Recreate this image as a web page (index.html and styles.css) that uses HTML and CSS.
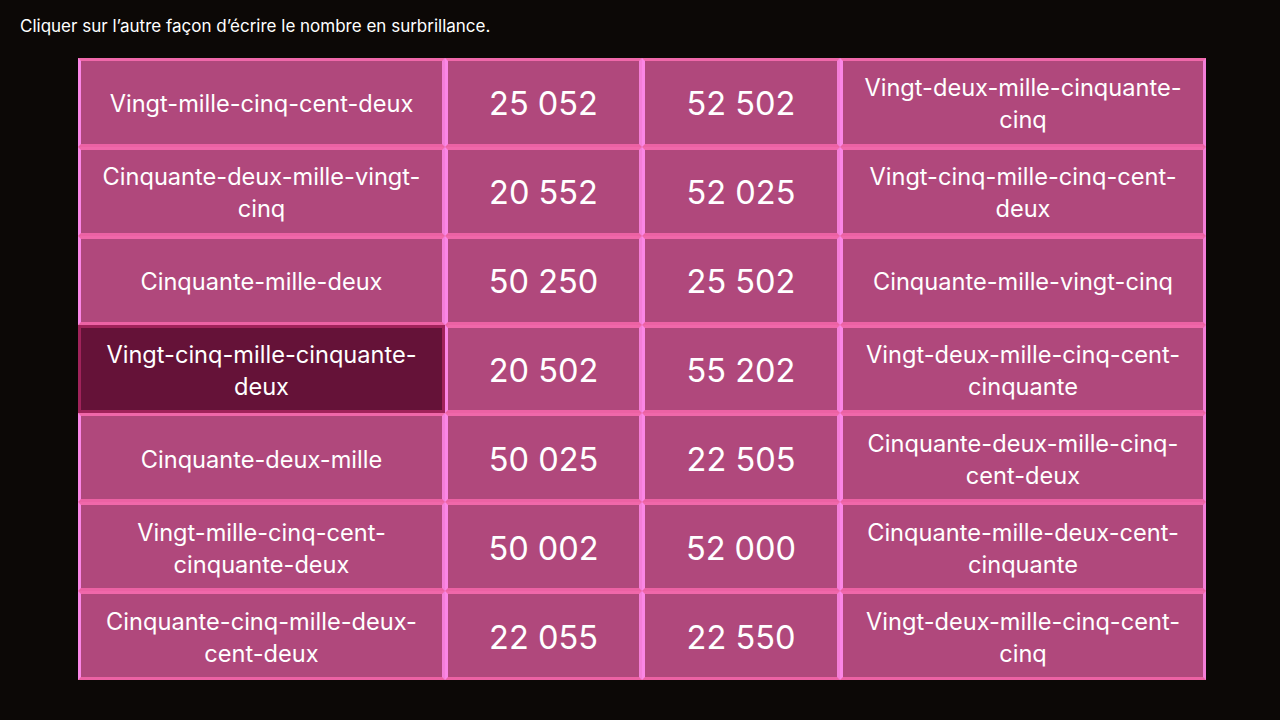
FILE: index.html
```html
<!DOCTYPE html>
<html lang="fr">
<head>
<meta charset="utf-8">
<link rel="stylesheet" href="styles.css">
</head>
<body>
<p class="title">Cliquer sur l’autre façon d’écrire le nombre en surbrillance.</p>
<div class="grid">
  <div class="cell word">Vingt-mille-cinq-cent-deux</div>
  <div class="cell num">25 052</div>
  <div class="cell num">52 502</div>
  <div class="cell word">Vingt-deux-mille-cinquante-cinq</div>

  <div class="cell word">Cinquante-deux-mille-vingt-cinq</div>
  <div class="cell num">20 552</div>
  <div class="cell num">52 025</div>
  <div class="cell word">Vingt-cinq-mille-cinq-cent-deux</div>

  <div class="cell word">Cinquante-mille-deux</div>
  <div class="cell num">50 250</div>
  <div class="cell num">25 502</div>
  <div class="cell word">Cinquante-mille-vingt-cinq</div>

  <div class="cell word active">Vingt-cinq-mille-cinquante-deux</div>
  <div class="cell num">20 502</div>
  <div class="cell num">55 202</div>
  <div class="cell word">Vingt-deux-mille-cinq-cent-cinquante</div>

  <div class="cell word">Cinquante-deux-mille</div>
  <div class="cell num">50 025</div>
  <div class="cell num">22 505</div>
  <div class="cell word">Cinquante-deux-mille-cinq-cent-deux</div>

  <div class="cell word">Vingt-mille-cinq-cent-cinquante-deux</div>
  <div class="cell num">50 002</div>
  <div class="cell num">52 000</div>
  <div class="cell word">Cinquante-mille-deux-cent-cinquante</div>

  <div class="cell word">Cinquante-cinq-mille-deux-cent-deux</div>
  <div class="cell num">22 055</div>
  <div class="cell num">22 550</div>
  <div class="cell word">Vingt-deux-mille-cinq-cent-cinq</div>
</div>
</body>
</html>
```
FILE: styles.css
```css
html, body {
  margin: 0;
  padding: 0;
  background: #0c0806;
  width: 1280px;
  height: 720px;
  overflow: hidden;
  font-family: "Inter", "Noto Sans", "Liberation Sans", sans-serif;
}
.title {
  margin: 0;
  padding: 15px 0 0 20px;
  height: 43px;
  box-sizing: border-box;
  color: #ffffff;
  font-size: 17px;
  line-height: 22px;
}
.grid {
  margin-left: 78px;
  width: 1128px;
  display: grid;
  grid-template-columns: 367px 197px 198px 366px;
  grid-template-rows: repeat(7, 1fr);
  height: 622px;
  margin-top: 15px;
}
.cell {
  box-sizing: border-box;
  background: #b0487c;
  border-style: solid;
  border-width: 3px;
  border-top-color: #f068aa;
  border-bottom-color: #ec62a4;
  border-left-color: #fb86e6;
  border-right-color: #f47ed8;
  color: #ffffff;
  display: flex;
  align-items: center;
  justify-content: center;
  text-align: center;
  padding-top: 4px;
}
.word {
  font-size: 23.6px;
  line-height: 32px;
  padding-left: 14px;
  padding-right: 14px;
}
.num {
  font-size: 32.5px;
  line-height: 40px;
}
.active {
  background: #651238;
  border-color: #a0235a;
}
```
